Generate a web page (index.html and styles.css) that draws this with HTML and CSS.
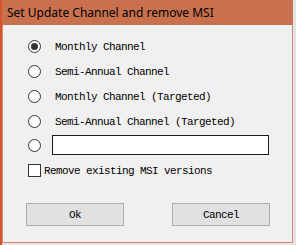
FILE: index.html
```html
<!DOCTYPE html>
<html lang="en">
<head>
    <meta charset="UTF-8">
    <title>Set Update Channel and remove MSI</title>
    <link rel="stylesheet" href="styles.css">
</head>
<body>
    <div class="window">
        <div class="titlebar">Set Update Channel and remove MSI</div>
        <div class="content">
            <label class="row">
                <span class="radio checked"></span>
                <span class="label">Monthly Channel</span>
            </label>
            <label class="row">
                <span class="radio"></span>
                <span class="label">Semi-Annual Channel</span>
            </label>
            <label class="row">
                <span class="radio"></span>
                <span class="label">Monthly Channel (Targeted)</span>
            </label>
            <label class="row">
                <span class="radio"></span>
                <span class="label">Semi-Annual Channel (Targeted)</span>
            </label>
            <div class="row custom-row">
                <span class="radio"></span>
                <span class="text-input"></span>
            </div>
            <label class="check-row">
                <span class="checkbox"></span>
                <span class="label">Remove existing MSI versions</span>
            </label>
            <div class="buttons">
                <button class="btn">Ok</button>
                <button class="btn">Cancel</button>
            </div>
        </div>
    </div>
</body>
</html>
```

FILE: styles.css
```css
body {
    margin: 0;
    height: 245px;
    overflow: hidden;
    background: linear-gradient(to right, #d4552b 2px, #e4e4e4 2px);
}
.window {
    margin-left: 2px;
    width: 291px;
    height: 243px;
    box-sizing: border-box;
    background: #f0f0f0;
    border: 1px solid #d58a6c;
    border-top: none;
    display: flex;
    flex-direction: column;
}
.titlebar {
    height: 25px;
    margin: 0 -1px;
    padding-left: 5px;
    background: #c9714f;
    color: #000;
    font-family: "Noto Sans", sans-serif;
    font-size: 12px;
    line-height: 26px;
}
.content {
    padding: 9px 0 0 25px;
    display: flex;
    flex-direction: column;
    font-family: "Liberation Mono", monospace;
    font-size: 11px;
    letter-spacing: -0.6px;
    color: #000;
}
.row {
    height: 25px;
    display: flex;
    align-items: center;
}
.radio {
    width: 13px;
    height: 13px;
    box-sizing: border-box;
    border: 1px solid #333;
    border-radius: 50%;
    background: #fff;
    margin-right: 14px;
    display: flex;
    align-items: center;
    justify-content: center;
    flex-shrink: 0;
}
.radio.checked::after {
    content: "";
    width: 7px;
    height: 7px;
    border-radius: 50%;
    background: #333;
}
.custom-row {
    height: 20px;
    margin-top: 1px;
}
.custom-row .radio {
    margin-right: 11px;
}
.text-input {
    width: 217px;
    height: 20px;
    box-sizing: border-box;
    border: 1px solid #1a1a1a;
    background: #fff;
}
.check-row {
    height: 13px;
    margin-top: 9px;
    display: flex;
    align-items: center;
}
.checkbox {
    width: 13px;
    height: 13px;
    box-sizing: border-box;
    border: 1px solid #333;
    background: #fff;
    margin-right: 3px;
}
.buttons {
    display: flex;
    gap: 48px;
    margin: 26px 0 0 -2px;
}
.btn {
    width: 98px;
    height: 23px;
    padding: 0;
    border: 1px solid #adadad;
    background: #e1e1e1;
    font-family: "Liberation Mono", monospace;
    font-size: 11px;
    letter-spacing: -0.6px;
    color: #000;
}
```
